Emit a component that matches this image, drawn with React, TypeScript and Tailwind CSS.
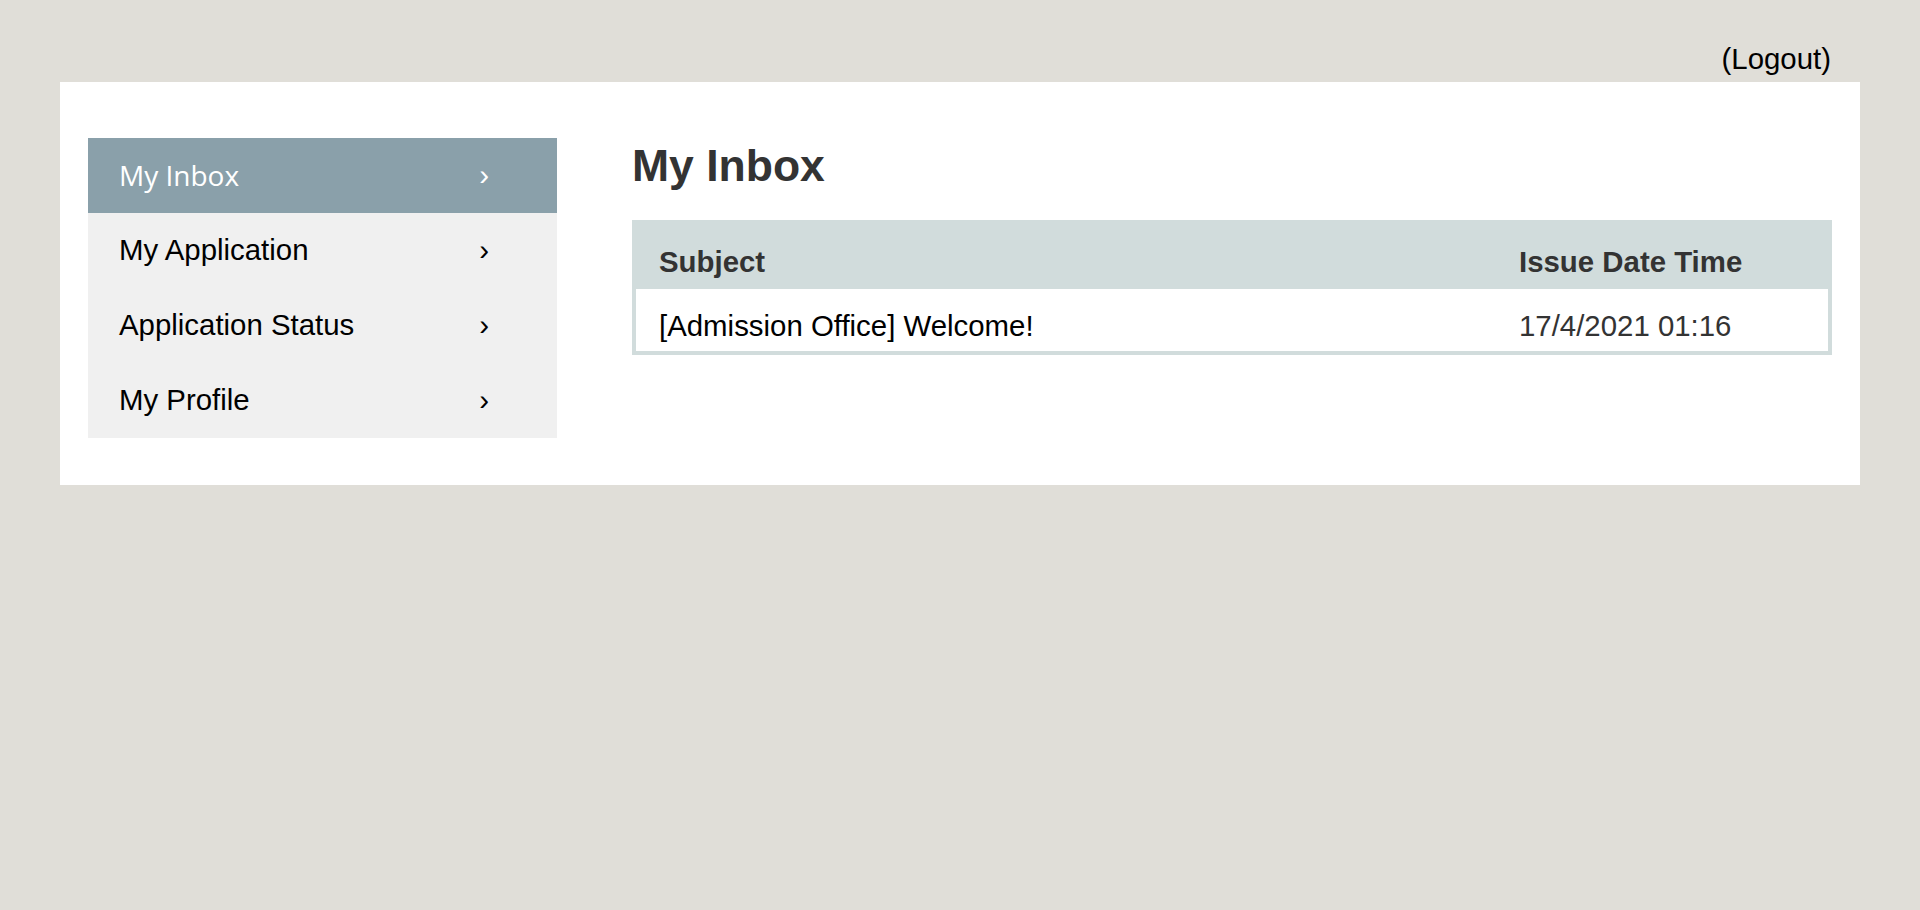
const menu = ['My Inbox', 'My Application', 'Application Status', 'My Profile'];

export default function App() {
	return (
		<div
			className="min-h-[910px] w-full bg-[#e0ded8] px-[60px] pb-10
				font-['Liberation_Sans',Arial,sans-serif] text-[29.4px] text-black"
		>
			<div className="flex justify-end pt-[42px] pb-[6px] pr-[29px] leading-[34px]">
				<a href="#">(Logout)</a>
			</div>

			<div className="flex items-start gap-[75px] bg-white px-[28px] pt-[56px] pb-[47px]">
				<nav className="flex w-[469px] shrink-0 flex-col bg-[#f0f0f0]">
					{menu.map((item, i) => (
						<a
							className={
								i === 0
									? "flex h-[75px] items-center justify-between bg-[#8aa0aa] pl-[31px] pr-[68px] font-['Open_Sans',sans-serif] text-[28px] text-white"
									: 'flex h-[75px] items-center justify-between pl-[31px] pr-[68px]'
							}
							href="#"
							key={item}
						>
							<span className={i === 0 ? '-mt-[2px]' : ''}>{item}</span>
							<span className="font-['Liberation_Sans',Arial,sans-serif] text-[29.4px]">›</span>
						</a>
					))}
				</nav>

				<main className="flex-1">
					<h1 className="mt-[3px] text-[44.5px] leading-[50px] font-bold text-[#333333]">My Inbox</h1>

					<table className="mt-[29px] w-full border-collapse border-4 border-[#d1dcdc]">
						<thead>
							<tr className="bg-[#d1dcdc] text-left font-bold text-[#333333]">
								<th className="pt-[21px] pb-[10px] pl-[23px] leading-[34px]">Subject</th>
								<th className="w-[311px] pt-[21px] pb-[10px] pl-0 leading-[34px]">Issue Date Time</th>
							</tr>
						</thead>
						<tbody>
							<tr>
								<td className="pt-[20px] pb-[8px] pl-[23px] leading-[34px]">[Admission Office] Welcome!</td>
								<td className="pt-[20px] pb-[8px] leading-[34px] text-[#333333]">17/4/2021 01:16</td>
							</tr>
						</tbody>
					</table>
				</main>
			</div>
		</div>
	);
}
